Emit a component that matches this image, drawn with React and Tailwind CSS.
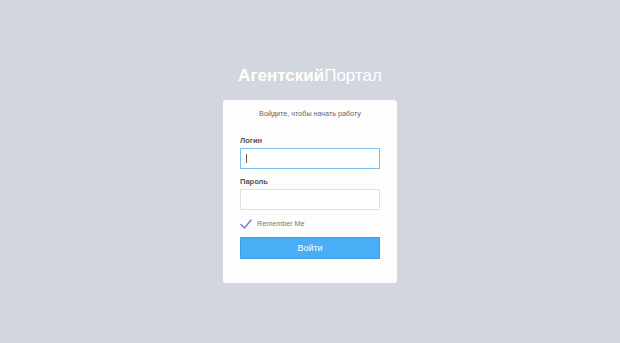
import React from "react";

const App = () => {
  return (
    <div
      className="min-h-[343px] bg-[#d2d6de] flex flex-col items-center"
      style={{ fontFamily: '"Liberation Sans", Arial, sans-serif' }}
    >
      {/* Logo */}
      <div className="mt-[65px] h-[22px] text-[17px] leading-[22px] text-white">
        <span className="font-bold">Агентский</span>
        <span className="font-light">Портал</span>
      </div>

      {/* Login box */}
      <div className="mt-[13px] w-[174px] bg-[#fdfdfd] rounded-[3px] px-[17px] pt-[9px] pb-[24px]">
        <p className="text-center text-[7.2px] leading-[10px] text-[#666]">
          Войдите, чтобы начать работу
        </p>

        <div className="mt-[17px]">
          <label className="block text-[7.5px] leading-[10px] font-bold text-[#555]">
            Логин
          </label>
          <div className="mt-[2px] h-[21px] border border-[#7cc0f2] bg-white flex items-center pl-[5px]">
            <span className="w-px h-[9px] bg-[#555]" />
          </div>
        </div>

        <div className="mt-[8px]">
          <label className="block text-[7.5px] leading-[10px] font-bold text-[#555]">
            Пароль
          </label>
          <div className="mt-[2px] h-[21px] border border-[#e1e1e1] bg-white" />
        </div>

        <div className="mt-[8px] flex items-center h-[12px]">
          <svg width="12" height="10" viewBox="0 0 12 10" className="mr-[5px]">
            <path
              d="M1 5.5 L4.5 9 L11 1"
              fill="none"
              stroke="#7b6dd3"
              strokeWidth="1.3"
              strokeLinecap="round"
              strokeLinejoin="round"
            />
          </svg>
          <span className="text-[7.2px] leading-[10px] text-[#777]">Remember Me</span>
        </div>

        <button className="mt-[7px] w-full h-[22px] bg-[#4aaef6] border border-[#3e9fe3] text-white text-[9px] leading-[20px]">
          Войти
        </button>
      </div>
    </div>
  );
};

export default App;
